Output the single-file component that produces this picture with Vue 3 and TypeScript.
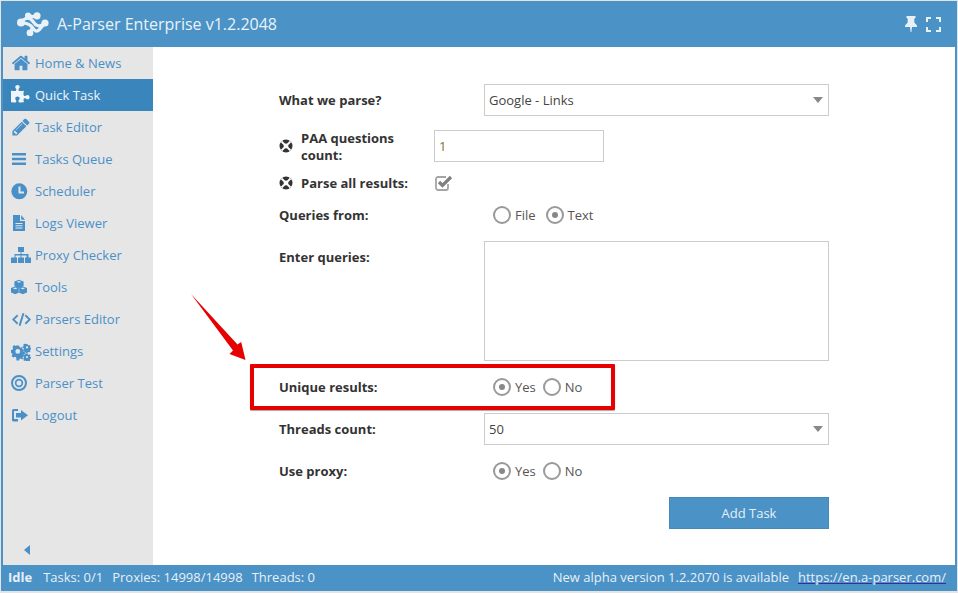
<script setup lang="ts">
interface NavItem { label: string; box: string; d: string; active?: boolean }

const fa = '0 0 1792 1792'
const nav: NavItem[] = [
  { label: 'Home & News', box: fa, d: 'M1472 992v480q0 26-19 45t-45 19h-384v-384h-256v384h-384q-26 0-45-19t-19-45v-480q0-1 .5-3t.5-3l575-474 575 474q1 2 1 6zm223-69l-62 74q-8 9-21 11h-3q-13 0-21-7l-692-577-692 577q-12 8-24 7-13-2-21-11l-62-74q-8-10-7-23.500t11-21.500l719-599q32-26 76-26t76 26l244 204v-195q0-14 9-23t23-9h192q14 0 23 9t9 23v408l219 182q10 8 11 21.500t-7 23.500z' },
  { label: 'Quick Task', active: true, box: fa, d: 'M1664 1098q0 81-44.500 135t-123.500 54q-41 0-77.500-17.500t-59-38-56.500-38-71-17.500q-110 0-110 124 0 39 16 115t15 115v5q-22 0-33 1-34 3-97.500 11.500t-115.500 13.500-98 5q-61 0-103-26.500t-42-83.500q0-37 17.500-71t38-56.500 38-59 17.500-77.500q0-79-54-123.500t-135-44.500q-84 0-143 45.500t-59 127.500q0 43 15 83t33.500 64.500 33.500 53 15 50.500q0 45-46 89-37 35-117 35-95 0-245-24-9-2-27.500-4t-27.500-4l-13-2q-1 0-3-1-2 0-2-1v-1024q2 1 17.500 3.500t34 5 21.500 3.500q150 24 245 24 80 0 117-35 46-44 46-89 0-22-15-50.500t-33.500-53-33.500-64.500-15-83q0-82 59-127.500t144-45.500q80 0 134 44.500t54 123.500q0 41-17.500 77.500t-38 59-38 56.500-17.500 71q0 57 42 83.500t103 26.500q64 0 180-15t163-17v2q-1 2-3.500 17.500t-5 34-3.500 21.500q-24 150-24 245 0 80 35 117 44 46 89 46 22 0 50.500-15t53-33.500 64.500-33.500 83-15q82 0 127.500 59t45.500 143z' },
  { label: 'Task Editor', box: fa, d: 'M491 1536l91-91-235-235-91 91v107h128v128h107zm523-928q0-22-22-22-10 0-17 7l-542 542q-7 7-7 17 0 22 22 22 10 0 17-7l542-542q7-7 7-17zm-54-192l416 416-832 832h-416v-416zm683 96q0 53-37 90l-166 166-416-416 166-165q36-38 90-38 53 0 91 38l235 234q37 39 37 91z' },
  { label: 'Tasks Queue', box: '0 0 20 20', d: 'M1 4h14v2.600H1zM1 8.700h14v2.600H1zM1 13.400h14V16H1z' },
  { label: 'Scheduler', box: '0 0 20 20', d: 'M8.300 2.300a8 8 0 1 0 0 16a8 8 0 1 0 0-16zM7.500 5.500h2v5h3.500v2H7.500z' },
  { label: 'Logs Viewer', box: '0 0 20 20', d: 'M2 2h7v6h5v10H2zM10.200 2l3.800 4.800h-3.800zM4.500 10v1h7v-1zM4.500 12.200v1h7v-1zM4.500 14.400v1h7v-1z' },
  { label: 'Proxy Checker', box: '0 0 20 20', d: 'M7 2h6v5h-2.500v2h7v3.500H20V18h-6v-5.500h1.500v-2h-5v2H13V18H7v-5.500h2.500v-2h-5v2H6V18H0v-5.500h3.500V9h6V7H7z' },
  { label: 'Tools', box: '0 0 20 20', d: 'M8 2.800l4.600 1.700v4.700L8 10.900 3.400 9.200V4.500zM4.200 9.500l4 1.500v4.400L4.200 17.200 0 15.400V11zM11.800 9.500l4.200 1.500v4.400l-4.200 1.800-4-1.800V11zM8 3.900L5.600 4.800 8 5.700l2.400-.9zM4.200 10.600l-2.200.8 2.200.8 2.200-.8zM11.800 10.600l-2.200.8 2.200.8 2.200-.8z' },
  { label: 'Parsers Editor', box: '0 0 20 20', d: 'M6 5.500l1.300 1.400L3.600 10.500l3.700 3.600L6 15.500 1 10.500zM15 5.500l5 5-5 5-1.300-1.400 3.700-3.600-3.700-3.600zM11.500 4l1.900.5L9.500 17l-1.900-.5z' },
  { label: 'Settings', box: '0 0 20 20', d: 'M5.500 4.500h2.600l.4 1.600 1.300.6 1.500-.8 1.700 1.800-.8 1.400.5 1.300 1.700.5v2.600l-1.700.5-.5 1.300.8 1.400-1.700 1.700-1.500-.8-1.300.5-.4 1.400H5.500L5.100 16.300l-1.300-.5-1.500.8L.6 14.900l.8-1.400-.5-1.300L0 11.700V9.100l1.700-.5.5-1.300-.8-1.400 1.700-1.800 1.500.8 1.300-.6zM6.800 8a2.400 2.400 0 1 0 0 4.800a2.400 2.400 0 1 0 0-4.800zM15.500 3l1 .1.300 1 .9.400.9-.4.900.9-.4.9.3.900 1 .3v1.200l-1 .3-.3.900.4.900-.9.900-.9-.4-.9.4-.3 1h-1.200l-.3-1-.9-.4-.9.4-.9-.9.4-.9-.4-.9-1-.3V5.700l1-.3.4-.9-.4-.9.9-.9.900.4.900-.4zM16 5.300a1.100 1.100 0 1 0 0 2.200a1.100 1.100 0 1 0 0-2.200zM15.500 12.500h1.100l.3.900.8.400.9-.4.800.8-.4.900.3.800.7.300v1.200l-.9.300-.3.800.4.900-.8.800-.9-.4-.8.300-.3.600h-1.200l-.3-.9-.8-.3-.9.4-.8-.8.4-.9-.3-.8-.9-.3v-1.200l.9-.3.3-.8-.4-.9.8-.8.9.4.800-.4zM16 15a1.100 1.100 0 1 0 0 2.200a1.100 1.100 0 1 0 0-2.200z' },
  { label: 'Parser Test', box: '0 0 20 20', d: 'M8 2a8 8 0 1 0 0 16a8 8 0 1 0 0-16zM8 4a6 6 0 1 1 0 12a6 6 0 1 1 0-12zM8 5.800a4.200 4.200 0 1 0 0 8.400a4.200 4.200 0 1 0 0-8.400zM8 7.500a2.500 2.500 0 1 1 0 5a2.500 2.500 0 1 1 0-5z' },
  { label: 'Logout', box: '0 0 20 20', d: 'M2.500 4H7v2H3v8h4v2.500H2.500A1.500 1.500 0 0 1 1 15V5.500A1.500 1.500 0 0 1 2.500 4zM10 5l7 5.300-7 5.300v-3.100H5V8.100h5z' },
]
</script>

<template>
  <div class="window">
    <header class="header">
      <svg class="logo" width="32" height="24" viewBox="0 0 32 24" fill="#e9f2f9">
        <path d="M4 10C9 5 13 5 16 9.500S22 16 28 11M4 10C9 12 12 11 15 15S19 21 23 17L28 11M11 3C15 4 17 6 20 3.500M13 21C15 19 15 17 15 15" fill="none" stroke="#e9f2f9" stroke-width="3.200" />
        <circle cx="11" cy="3.500" r="3" />
        <circle cx="20" cy="3.800" r="3.600" />
        <circle cx="4" cy="10.500" r="4" />
        <circle cx="28" cy="11" r="3.600" />
        <circle cx="13" cy="21" r="3.400" />
      </svg>
      <span class="title">A-Parser Enterprise v1.2.2048</span>
      <svg class="pin" width="12" height="16" viewBox="0 0 12 16" fill="#e6f0f8">
        <path d="M1.500 0h9v1.800L9.300 2.800V6.500L12 9.500V11H7L6.400 16H5.600L5 11H0V9.500L2.700 6.500V2.800L1.500 1.800z" />
      </svg>
      <svg class="expand" width="15" height="15" viewBox="0 0 15 15" fill="none" stroke="#e6f0f8" stroke-width="2">
        <path d="M1 5V1H5M10 1H14V5M14 10V14H10M5 14H1V10" />
      </svg>
    </header>

    <div class="body">
      <nav class="sidebar">
        <a v-for="item in nav" :key="item.label" class="nav-item" :class="{ active: item.active }">
          <svg class="nav-icon" width="20" height="20" :viewBox="item.box">
            <path :d="item.d" fill="currentColor" fill-rule="evenodd" />
          </svg>
          <span>{{ item.label }}</span>
        </a>
        <div class="collapse"><i class="collapse-arrow"></i></div>
      </nav>

      <main class="main">
        <form class="form" @submit.prevent>
          <div class="row">
            <label class="label">What we parse?</label>
            <div class="select">Google - Links<i class="caret"></i></div>
          </div>

          <div class="row row-paa">
            <svg class="help" width="14" height="14" viewBox="0 0 14 14">
              <circle cx="7" cy="7" r="6.500" fill="#333" />
              <path d="M2.500 2.500L11.500 11.500M11.500 2.500L2.500 11.500" stroke="#fff" stroke-width="1.800" />
              <circle cx="7" cy="7" r="2.400" fill="#fff" />
            </svg>
            <label class="label label-help">PAA questions count:</label>
            <div class="input">1</div>
          </div>

          <div class="row row-parse">
            <svg class="help" width="14" height="14" viewBox="0 0 14 14">
              <circle cx="7" cy="7" r="6.500" fill="#333" />
              <path d="M2.500 2.500L11.500 11.500M11.500 2.500L2.500 11.500" stroke="#fff" stroke-width="1.800" />
              <circle cx="7" cy="7" r="2.400" fill="#fff" />
            </svg>
            <label class="label label-help">Parse all results:</label>
            <svg class="check" width="18" height="16" viewBox="0 0 18 16" fill="none">
              <path d="M13 9v4a2 2 0 0 1-2 2H3a2 2 0 0 1-2-2V4a2 2 0 0 1 2-2h8" stroke="#a5a5a5" stroke-width="1.800" />
              <path d="M4 7l3.500 3.500L16 2" stroke="#808080" stroke-width="3.200" />
            </svg>
          </div>

          <div class="row row-flush">
            <label class="label">Queries from:</label>
            <div class="radios">
              <span class="radio"></span><span class="radio-text wide">File</span>
              <span class="radio on"></span><span class="radio-text">Text</span>
            </div>
          </div>

          <div class="row row-area">
            <label class="label">Enter queries:</label>
            <div class="textarea"></div>
          </div>

          <div class="row">
            <label class="label">Unique results:</label>
            <div class="radios">
              <span class="radio on"></span><span class="radio-text">Yes</span>
              <span class="radio"></span><span class="radio-text">No</span>
            </div>
          </div>

          <div class="row">
            <label class="label">Threads count:</label>
            <div class="select">50<i class="caret"></i></div>
          </div>

          <div class="row">
            <label class="label">Use proxy:</label>
            <div class="radios">
              <span class="radio on"></span><span class="radio-text">Yes</span>
              <span class="radio"></span><span class="radio-text">No</span>
            </div>
          </div>

          <div class="actions">
            <button class="add" type="button">Add Task</button>
          </div>
        </form>

        <div class="highlight"></div>
        <svg class="arrow" width="60" height="70" viewBox="0 0 60 70">
          <path d="M1 0L47.500 50.500L51.200 48L55.500 66L39.500 60L43 56.500z" fill="#e60000" />
        </svg>
      </main>
    </div>

    <footer class="status">
      <b>Idle</b>
      <span class="s1">Tasks: 0/1</span>
      <span class="s2">Proxies: 14998/14998</span>
      <span class="s2">Threads: 0</span>
      <span class="alpha">New alpha version 1.2.2070 is available</span>
      <a class="site">https://en.a-parser.com/</a>
    </footer>
  </div>
</template>

<style scoped>
.window {
  box-sizing: border-box;
  width: 956px;
  height: 590px;
  margin: 1px 1px 2px;
  display: flex;
  flex-direction: column;
  font-family: "Open Sans", sans-serif;
  font-size: 13px;
  background: #4b92c6;
}
.header {
  flex: none;
  height: 46px;
  display: flex;
  align-items: center;
  padding: 0 16px;
  color: #e9f2f9;
}
.logo { flex: none; }
.title { margin-left: 8px; font-size: 16px; flex: 1; }
.pin { flex: none; margin-right: 9px; }
.expand { flex: none; }
.body {
  flex: 1;
  min-height: 0;
  display: flex;
  margin: 0 2px;
  background: #fff;
}
.sidebar {
  flex: none;
  width: 150px;
  display: flex;
  flex-direction: column;
  background: #e6e6e6;
}
.nav-item {
  height: 32px;
  display: flex;
  align-items: center;
  padding-left: 8px;
  color: #4a90c8;
  cursor: pointer;
}
.nav-item.active {
  background: #3a86bc;
  color: #eef5fb;
}
.nav-icon { flex: none; margin-right: 4px; }
.collapse { margin-top: auto; padding: 0 0 10px 21px; }
.collapse-arrow {
  display: block;
  width: 0;
  height: 0;
  border-style: solid;
  border-width: 5px 6px 5px 0;
  border-color: transparent #4a90c8 transparent transparent;
}
.main {
  flex: 1;
  position: relative;
  min-width: 0;
}
.form {
  width: 550px;
  margin-left: 126px;
  padding-top: 37px;
  color: #333;
}
.row {
  display: flex;
  align-items: center;
  height: 32px;
  margin-bottom: 10px;
}
.row-paa { margin-top: 14px; margin-bottom: 5px; }
.row-parse { margin-bottom: 0; }
.row-area { align-items: flex-start; height: 120px; }
.row-area .label { margin-top: 8px; }
.label {
  flex: none;
  width: 205px;
  font-weight: 700;
  line-height: 17px;
}
.help { flex: none; margin-right: 8px; }
.label-help { width: 133px; }
.row-paa .label-help { padding: 2px 22px 0 0; box-sizing: border-box; }
.select {
  flex: none;
  position: relative;
  box-sizing: border-box;
  width: 345px;
  height: 32px;
  line-height: 30px;
  padding-left: 4px;
  border: 1px solid #ccc;
  color: #444;
}
.caret {
  position: absolute;
  right: 5px;
  top: 12px;
  width: 0;
  height: 0;
  border-style: solid;
  border-width: 6px 5px 0;
  border-color: #888 transparent transparent;
}
.input {
  box-sizing: border-box;
  width: 170px;
  height: 32px;
  line-height: 30px;
  padding-left: 4px;
  border: 1px solid #ccc;
  color: #8a6d3b;
}
.check { margin-left: 1px; }
.radios { display: flex; align-items: center; padding-left: 9px; color: #555; }
.radio {
  box-sizing: border-box;
  position: relative;
  width: 18px;
  height: 18px;
  border: 2px solid #999;
  border-radius: 50%;
  background: #fff;
}
.radio.on::after {
  content: "";
  position: absolute;
  left: 4px;
  top: 4px;
  width: 6px;
  height: 6px;
  border-radius: 50%;
  background: #888;
}
.radio-text { margin: 0 7px 0 4px; }
.radio-text.wide { margin-right: 10px; }
.textarea {
  box-sizing: border-box;
  width: 345px;
  height: 120px;
  border: 1px solid #ccc;
}
.actions { display: flex; justify-content: flex-end; }
.add {
  width: 160px;
  height: 32px;
  border: 1px solid #4589bb;
  background: #4b92c6;
  color: #e6f0f8;
  font: inherit;
  padding: 0;
}
.highlight {
  position: absolute;
  left: 97px;
  top: 317px;
  box-sizing: border-box;
  width: 365px;
  height: 46px;
  border: 4px solid #e60000;
  border-radius: 1px;
  box-shadow: 0 1px 1px rgba(0, 0, 0, .35);
}
.arrow {
  position: absolute;
  left: 37px;
  top: 247px;
}
.status {
  flex: none;
  height: 26px;
  display: flex;
  align-items: center;
  padding: 0 11px 2px 7px;
  box-sizing: border-box;
  color: #e6f0f8;
}
.status b { font-weight: 700; }
.s1 { margin-left: 11px; }
.s2 { margin-left: 9px; }
.alpha { margin-left: auto; }
.site {
  margin-left: 9px;
  text-decoration: underline;
  text-decoration-color: #3d2aa0;
}
</style>

<style>
html, body { background: #e4e4e4; }
</style>
